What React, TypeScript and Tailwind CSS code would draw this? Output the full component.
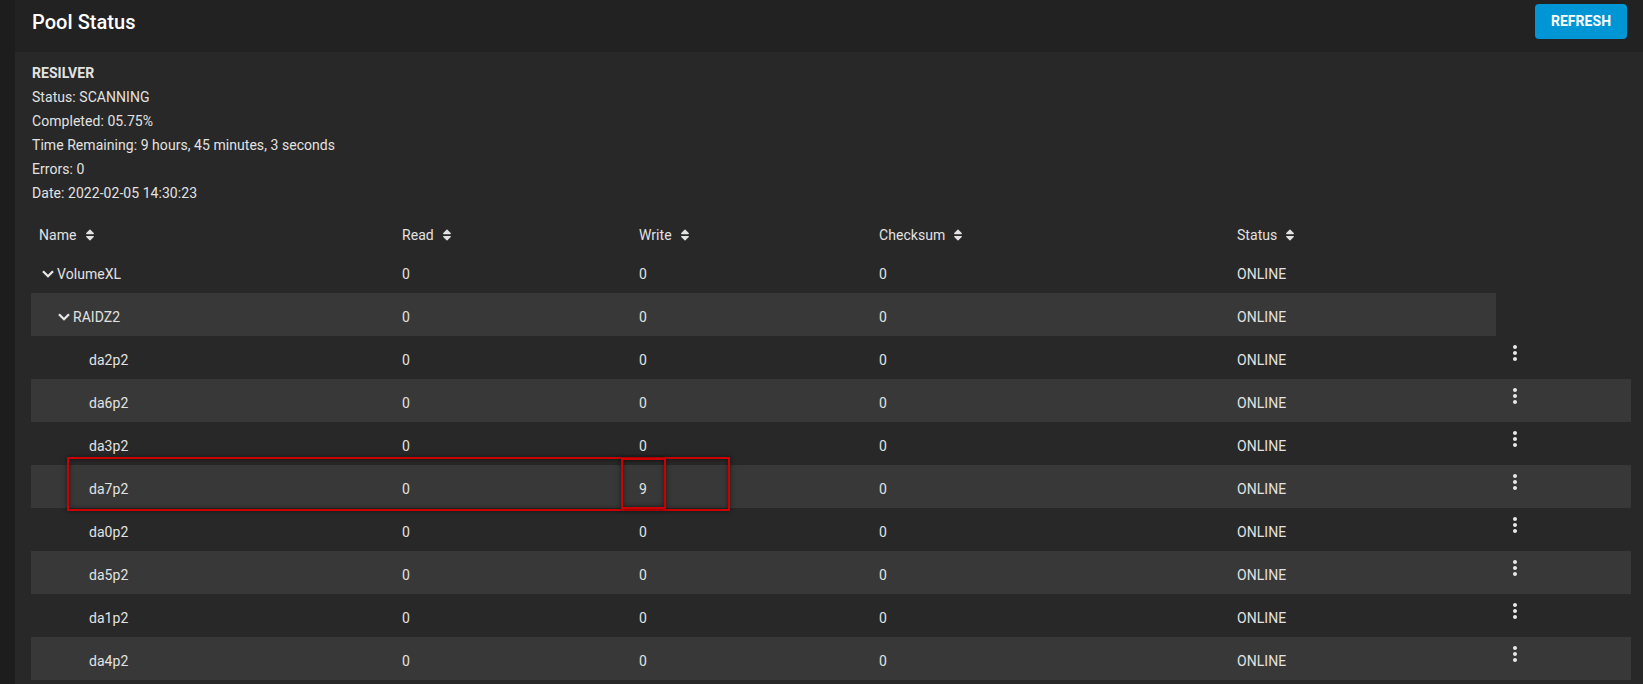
import { FaSort } from "react-icons/fa";
import { MdMoreVert } from "react-icons/md";

type Row = {
  name: string;
  level: 0 | 1 | 2;
  expandable?: boolean;
  read: string;
  write: string;
  checksum: string;
  status: string;
  actions: boolean;
};

const rows: Row[] = [
  { name: "VolumeXL", level: 0, expandable: true, read: "0", write: "0", checksum: "0", status: "ONLINE", actions: false },
  { name: "RAIDZ2", level: 1, expandable: true, read: "0", write: "0", checksum: "0", status: "ONLINE", actions: false },
  { name: "da2p2", level: 2, read: "0", write: "0", checksum: "0", status: "ONLINE", actions: true },
  { name: "da6p2", level: 2, read: "0", write: "0", checksum: "0", status: "ONLINE", actions: true },
  { name: "da3p2", level: 2, read: "0", write: "0", checksum: "0", status: "ONLINE", actions: true },
  { name: "da7p2", level: 2, read: "0", write: "9", checksum: "0", status: "ONLINE", actions: true },
  { name: "da0p2", level: 2, read: "0", write: "0", checksum: "0", status: "ONLINE", actions: true },
  { name: "da5p2", level: 2, read: "0", write: "0", checksum: "0", status: "ONLINE", actions: true },
  { name: "da1p2", level: 2, read: "0", write: "0", checksum: "0", status: "ONLINE", actions: true },
  { name: "da4p2", level: 2, read: "0", write: "0", checksum: "0", status: "ONLINE", actions: true },
];

const indent: Record<number, string> = { 0: "pl-2", 1: "pl-6", 2: "pl-10" };

function Chevron() {
  return (
    <svg width="12" height="8" viewBox="0 0 12 8" className="mt-[-1px]">
      <polyline points="1,1.2 6,6.2 11,1.2" fill="none" stroke="#e8e8e8" strokeWidth="2.3" />
    </svg>
  );
}

function SortHead({ label, w }: { label: string; w: string }) {
  return (
    <div className={`flex items-center gap-[6px] pl-2 ${w}`}>
      <span>{label}</span>
      <FaSort size={14} />
    </div>
  );
}

export default function App() {
  return (
    <div className="flex h-[684px] w-full overflow-hidden bg-[#1d1d1d] font-[Roboto,sans-serif] text-[14px] tracking-[0.05px] text-[#e2e2e2]">
      <div className="w-[15px] shrink-0" />
      <div className="flex flex-1 flex-col bg-[#282828]">
        {/* Header */}
        <div className="h-[52px] shrink-0 bg-[#222222] pl-[17px] pr-4">
          <div className="flex h-[43px] items-center justify-between">
            <h1 className="text-[20px] font-medium text-white">Pool Status</h1>
            <button className="h-[35px] w-[92px] rounded-[4px] bg-[#0095d5] text-[14px] font-bold text-white">
              REFRESH
            </button>
          </div>
        </div>

        {/* Body */}
        <div className="relative flex-1 pl-4 pt-[9px]">
          <div className="ml-px leading-[24px]">
            <div className="font-bold">RESILVER</div>
            <div>Status: SCANNING</div>
            <div>Completed: 05.75%</div>
            <div>Time Remaining: 9 hours, 45 minutes, 3 seconds</div>
            <div>Errors: 0</div>
            <div>Date: 2022-02-05 14:30:23</div>
          </div>

          {/* Table header */}
          <div className="flex h-[45px] items-center pt-[15px]">
            <SortHead label="Name" w="w-[363px]" />
            <SortHead label="Read" w="w-[237px]" />
            <SortHead label="Write" w="w-[240px]" />
            <SortHead label="Checksum" w="w-[358px]" />
            <SortHead label="Status" w="w-[267px]" />
            <div className="w-[135px]" />
          </div>

          {/* Rows */}
          {rows.map((r, i) => {
            const striped = i % 2 === 1;
            const bg = striped ? "bg-[#383838]" : "";
            return (
              <div key={r.name} className="flex h-[43px]">
                <div className={`flex w-[1465px] items-center pt-[5px] ${bg}`}>
                  <div className={`flex w-[363px] items-center ${indent[r.level]}`}>
                    <span className="flex w-[18px] justify-center">
                      {r.expandable && <Chevron />}
                    </span>
                    <span>{r.name}</span>
                  </div>
                  <div className="w-[237px] pl-2">{r.read}</div>
                  <div className="w-[240px] pl-2">{r.write}</div>
                  <div className="w-[358px] pl-2">{r.checksum}</div>
                  <div className="w-[267px] pl-2">{r.status}</div>
                </div>
                {r.actions && (
                  <div className={`w-[135px] pl-[7px] pt-[5px] ${bg}`}>
                    <MdMoreVert size={24} className="text-[#e8e8e8]" />
                  </div>
                )}
              </div>
            );
          })}

          {/* Annotation overlays */}
          <div className="pointer-events-none absolute left-[52px] top-[405px] h-[54px] w-[663px] border-2 border-[#cc0000] shadow-[0_0_5px_rgba(0,0,0,0.5),inset_0_0_5px_rgba(0,0,0,0.5)]" />
          <div className="pointer-events-none absolute left-[606px] top-[406px] h-[51px] w-[45px] border-2 border-[#cc0000] shadow-[0_0_5px_rgba(0,0,0,0.5),inset_0_0_5px_rgba(0,0,0,0.5)]" />
        </div>
      </div>
    </div>
  );
}
